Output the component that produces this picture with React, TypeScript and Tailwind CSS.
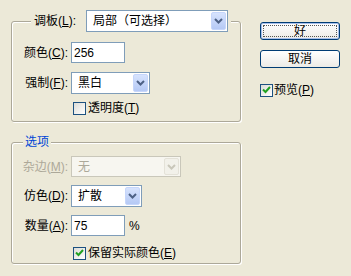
import type { ReactNode } from 'react';

const Chevron = ({ color = '#4d6185' }: { color?: string }) => (
  <svg width="9" height="6" viewBox="0 0 9 6">
    <path d="M1 1 L4.5 4.5 L8 1" stroke={color} strokeWidth="2" fill="none" />
  </svg>
);

const Combo = ({ value, className, disabled }: { value: string; className: string; disabled?: boolean }) => (
  <div
    className={
      'flex items-stretch p-[1px] border ' +
      (disabled ? 'border-[#c9c7ba] bg-[#f7f6f0] text-[#aca899] ' : 'border-[#7f9db9] bg-white text-black ') +
      className
    }
  >
    <span className="flex-1 pl-[5px] flex items-center">{value}</span>
    {disabled ? (
      <span className="w-[15px] flex items-center justify-center rounded-[2px] border border-[#e4e2d8] bg-[#f2f1ea]">
        <Chevron color="#c9c7ba" />
      </span>
    ) : (
      <span className="w-[15px] flex items-center justify-center rounded-[2px] border border-[#c6d6fb] bg-linear-to-b from-[#d7e3fd] to-[#b5c9f5]">
        <Chevron />
      </span>
    )}
  </div>
);

const Field = ({ value, className }: { value: string; className: string }) => (
  <div className={'h-[21px] border border-[#7f9db9] bg-white pl-[2px] flex items-center ' + className}>
    {value}
  </div>
);

const Check = ({ checked }: { checked?: boolean }) => (
  <span className="w-[13px] h-[13px] shrink-0 border border-[#1c5180] bg-linear-to-br from-[#dcdcd7] to-white flex items-center justify-center">
    {checked && (
      <svg width="9" height="8" viewBox="0 0 9 8">
        <path d="M1 3.5 L3.5 6 L8 1" stroke="#21a121" strokeWidth="2" fill="none" />
      </svg>
    )}
  </span>
);

const Row = ({ label, children, className, disabled }: { label: ReactNode; children: ReactNode; className: string; disabled?: boolean }) => (
  <div className={'flex items-center ' + className}>
    <span className={'w-[57px] text-right pr-[1px] ' + (disabled ? 'text-[#aca899]' : '')}>{label}</span>
    <div className="ml-[2px] flex items-center">{children}</div>
  </div>
);

const fieldsetCls =
  'border border-[#aca899] rounded-[3px] shadow-[inset_1px_1px_0_#fff,1px_1px_0_#fff]';

export default function App() {
  return (
    <div
      className="w-[351px] h-[276px] bg-[#ece9d8] text-[12px] leading-[14px] text-black flex items-start"
      style={{ fontFamily: '"Liberation Sans", "Noto Sans CJK SC", sans-serif' }}
    >
      <div className="ml-[11px] w-[230px] flex flex-col">
        <fieldset className={fieldsetCls + ' mt-[10px] pb-[6px]'}>
          <legend className="ml-[19px] px-[3px] bg-[#ece9d8]">
            <div className="flex items-center">
              <span className="w-[52px]">
                调板(<u>L</u>):
              </span>
              <Combo value="局部（可选择）" className="w-[142px] h-[22px]" />
            </div>
          </legend>
          <Row label={<>颜色(<u>C</u>):</>} className="mt-[10px]">
            <Field value="256" className="w-[54px]" />
          </Row>
          <Row label={<>强制(<u>F</u>):</>} className="mt-[9px]">
            <Combo value="黑白" className="w-[79px] h-[22px]" />
          </Row>
          <div className="mt-[7px] ml-[61px] flex items-center gap-[2px]">
            <Check />
            <span>
              透明度(<u>T</u>)
            </span>
          </div>
        </fieldset>

        <fieldset className={fieldsetCls + ' mt-[13px] pb-[3px]'}>
          <legend className="ml-[11px] px-[2px] bg-[#ece9d8] text-[#0046d5]">选项</legend>
          <Row label={<>杂边(<u>M</u>):</>} className="mt-[7px]" disabled>
            <Combo value="无" className="w-[110px] h-[21px]" disabled />
          </Row>
          <Row label={<>仿色(<u>D</u>):</>} className="mt-[8px]">
            <Combo value="扩散" className="w-[71px] h-[22px]" />
          </Row>
          <Row label={<>数量(<u>A</u>):</>} className="mt-[8px]">
            <Field value="75" className="w-[54px]" />
            <span className="ml-[4px]">%</span>
          </Row>
          <div className="mt-[10px] ml-[61px] flex items-center gap-[2px]">
            <Check checked />
            <span>
              保留实际颜色(<u>E</u>)
            </span>
          </div>
        </fieldset>
      </div>

      <div className="ml-[19px] w-[80px] flex flex-col">
        <button className="relative mt-[22px] h-[18px] rounded-[3px] border border-[#003c74] bg-linear-to-b from-white to-[#ecebe6] shadow-[inset_0_0_0_1px_#a8c0ec] flex items-center justify-center">
          <span className="absolute inset-[2px] border border-dotted border-[#555]" />
          好
        </button>
        <button className="mt-[10px] h-[18px] rounded-[3px] border border-[#003c74] bg-linear-to-b from-white to-[#ecebe6] flex items-center justify-center">
          取消
        </button>
        <div className="mt-[15px] flex items-center gap-[1px]">
          <Check checked />
          <span>
            预览(<u>P</u>)
          </span>
        </div>
      </div>
    </div>
  );
}
